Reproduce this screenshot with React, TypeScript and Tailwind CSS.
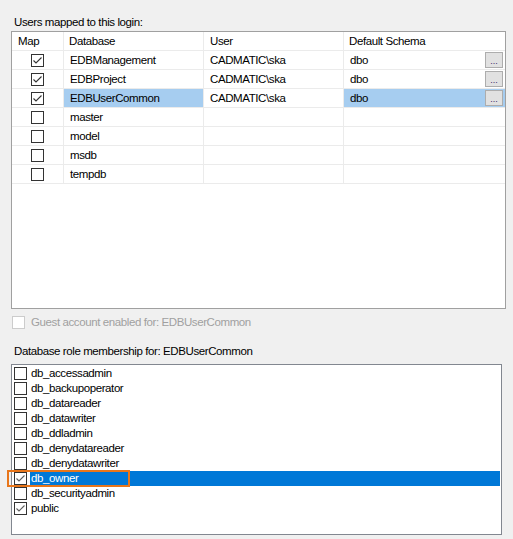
import React from 'react';

const font = "font-['Segoe_UI','Liberation_Sans',Arial,sans-serif] text-[11.5px] tracking-[-0.4px]";

type GridRow = { db: string; user: string; schema: string; mapped: boolean; selected?: boolean };

const gridRows: GridRow[] = [
    { db: 'EDBManagement', user: 'CADMATIC\\ska', schema: 'dbo', mapped: true },
    { db: 'EDBProject', user: 'CADMATIC\\ska', schema: 'dbo', mapped: true },
    { db: 'EDBUserCommon', user: 'CADMATIC\\ska', schema: 'dbo', mapped: true, selected: true },
    { db: 'master', user: '', schema: '', mapped: false },
    { db: 'model', user: '', schema: '', mapped: false },
    { db: 'msdb', user: '', schema: '', mapped: false },
    { db: 'tempdb', user: '', schema: '', mapped: false },
];

const roles = [
    { name: 'db_accessadmin', on: false },
    { name: 'db_backupoperator', on: false },
    { name: 'db_datareader', on: false },
    { name: 'db_datawriter', on: false },
    { name: 'db_ddladmin', on: false },
    { name: 'db_denydatareader', on: false },
    { name: 'db_denydatawriter', on: false },
    { name: 'db_owner', on: true, selected: true },
    { name: 'db_securityadmin', on: false },
    { name: 'public', on: true },
];

function CheckBox({ checked, disabled, tick = '#333333' }: { checked: boolean; disabled?: boolean; tick?: string }) {
    return (
        <span className={`w-[13px] h-[13px] shrink-0 border bg-white flex items-center justify-center ${disabled ? 'border-[#cccccc]' : 'border-[#333333]'}`}>
            {checked && (
                <svg width="11" height="11" viewBox="0 0 11 11">
                    <path d="M1.5 5.5 L4 8 L9.5 2.5" fill="none" stroke={tick} strokeWidth="1.1" />
                </svg>
            )}
        </span>
    );
}

export default function App() {
    const cell = "h-[19px] pt-[1px] border-b border-r border-[#ebebeb] flex items-center";
    return (
        <div className={`w-[513px] h-[539px] bg-[#f0f0f0] text-black relative ${font}`}>
            {/* USERS MAPPED */}
            <div className="pt-[15px] pl-[14px] h-[31px] leading-[15px]">Users mapped to this login:</div>
            <div className="ml-[11px] w-[495px] h-[278px] border border-[#a0a0a0] bg-white">
                <div className="grid grid-cols-[52px_140px_140px_1fr]">
                    <div className={`${cell} pl-[6px]`}>Map</div>
                    <div className={`${cell} pl-[5px]`}>Database</div>
                    <div className={`${cell} pl-[6px]`}>User</div>
                    <div className={`${cell} pl-[5px] border-r-0`}>Default Schema</div>
                    {gridRows.map((r) => (
                        <React.Fragment key={r.db}>
                            <div className={`${cell} justify-center`}>
                                <CheckBox checked={r.mapped} />
                            </div>
                            <div className={`${cell} pl-[6px] ${r.selected ? 'bg-[#a6cdf0]' : ''}`}>{r.db}</div>
                            <div className={`${cell} pl-[6px]`}>{r.user}</div>
                            <div className={`${cell} pl-[6px] pr-[2px] border-r-0 justify-between ${r.selected ? 'bg-[#a6cdf0]' : ''}`}>
                                <span>{r.schema}</span>
                                {r.mapped && (
                                    <span className="w-[18px] h-[16px] -mt-[1px] bg-[#e1e1e1] border border-[#adadad] flex items-end justify-center text-[9px] leading-[11px] tracking-normal text-[#3a2a6a]">...</span>
                                )}
                            </div>
                        </React.Fragment>
                    ))}
                </div>
            </div>

            {/* GUEST */}
            <div className="mt-[6px] ml-[12px] h-[15px] flex items-center gap-[6px] text-[#a0a0a0]">
                <CheckBox checked={false} disabled />
                <span>Guest account enabled for: EDBUserCommon</span>
            </div>

            {/* ROLES */}
            <div className="mt-[14px] pl-[14px] h-[20px] leading-[15px]">Database role membership for: EDBUserCommon</div>
            <div className="ml-[11px] w-[491px] h-[171px] border border-[#828790] bg-white pt-[1px]">
                {roles.map((r) => (
                    <div key={r.name} className="h-[15px] flex items-center pl-[2px]">
                        <CheckBox checked={r.on} tick="#606060" />
                        <span className={`ml-[3px] h-[15px] flex-1 mr-[1px] pl-[1px] leading-[15px] ${r.selected ? 'bg-[#0078d7] text-white' : ''}`}>{r.name}</span>
                    </div>
                ))}
            </div>

            {/* annotation highlight */}
            <div className="absolute left-[7px] top-[470px] w-[123px] h-[17px] border-2 border-[#e8761b]" />
        </div>
    );
}
